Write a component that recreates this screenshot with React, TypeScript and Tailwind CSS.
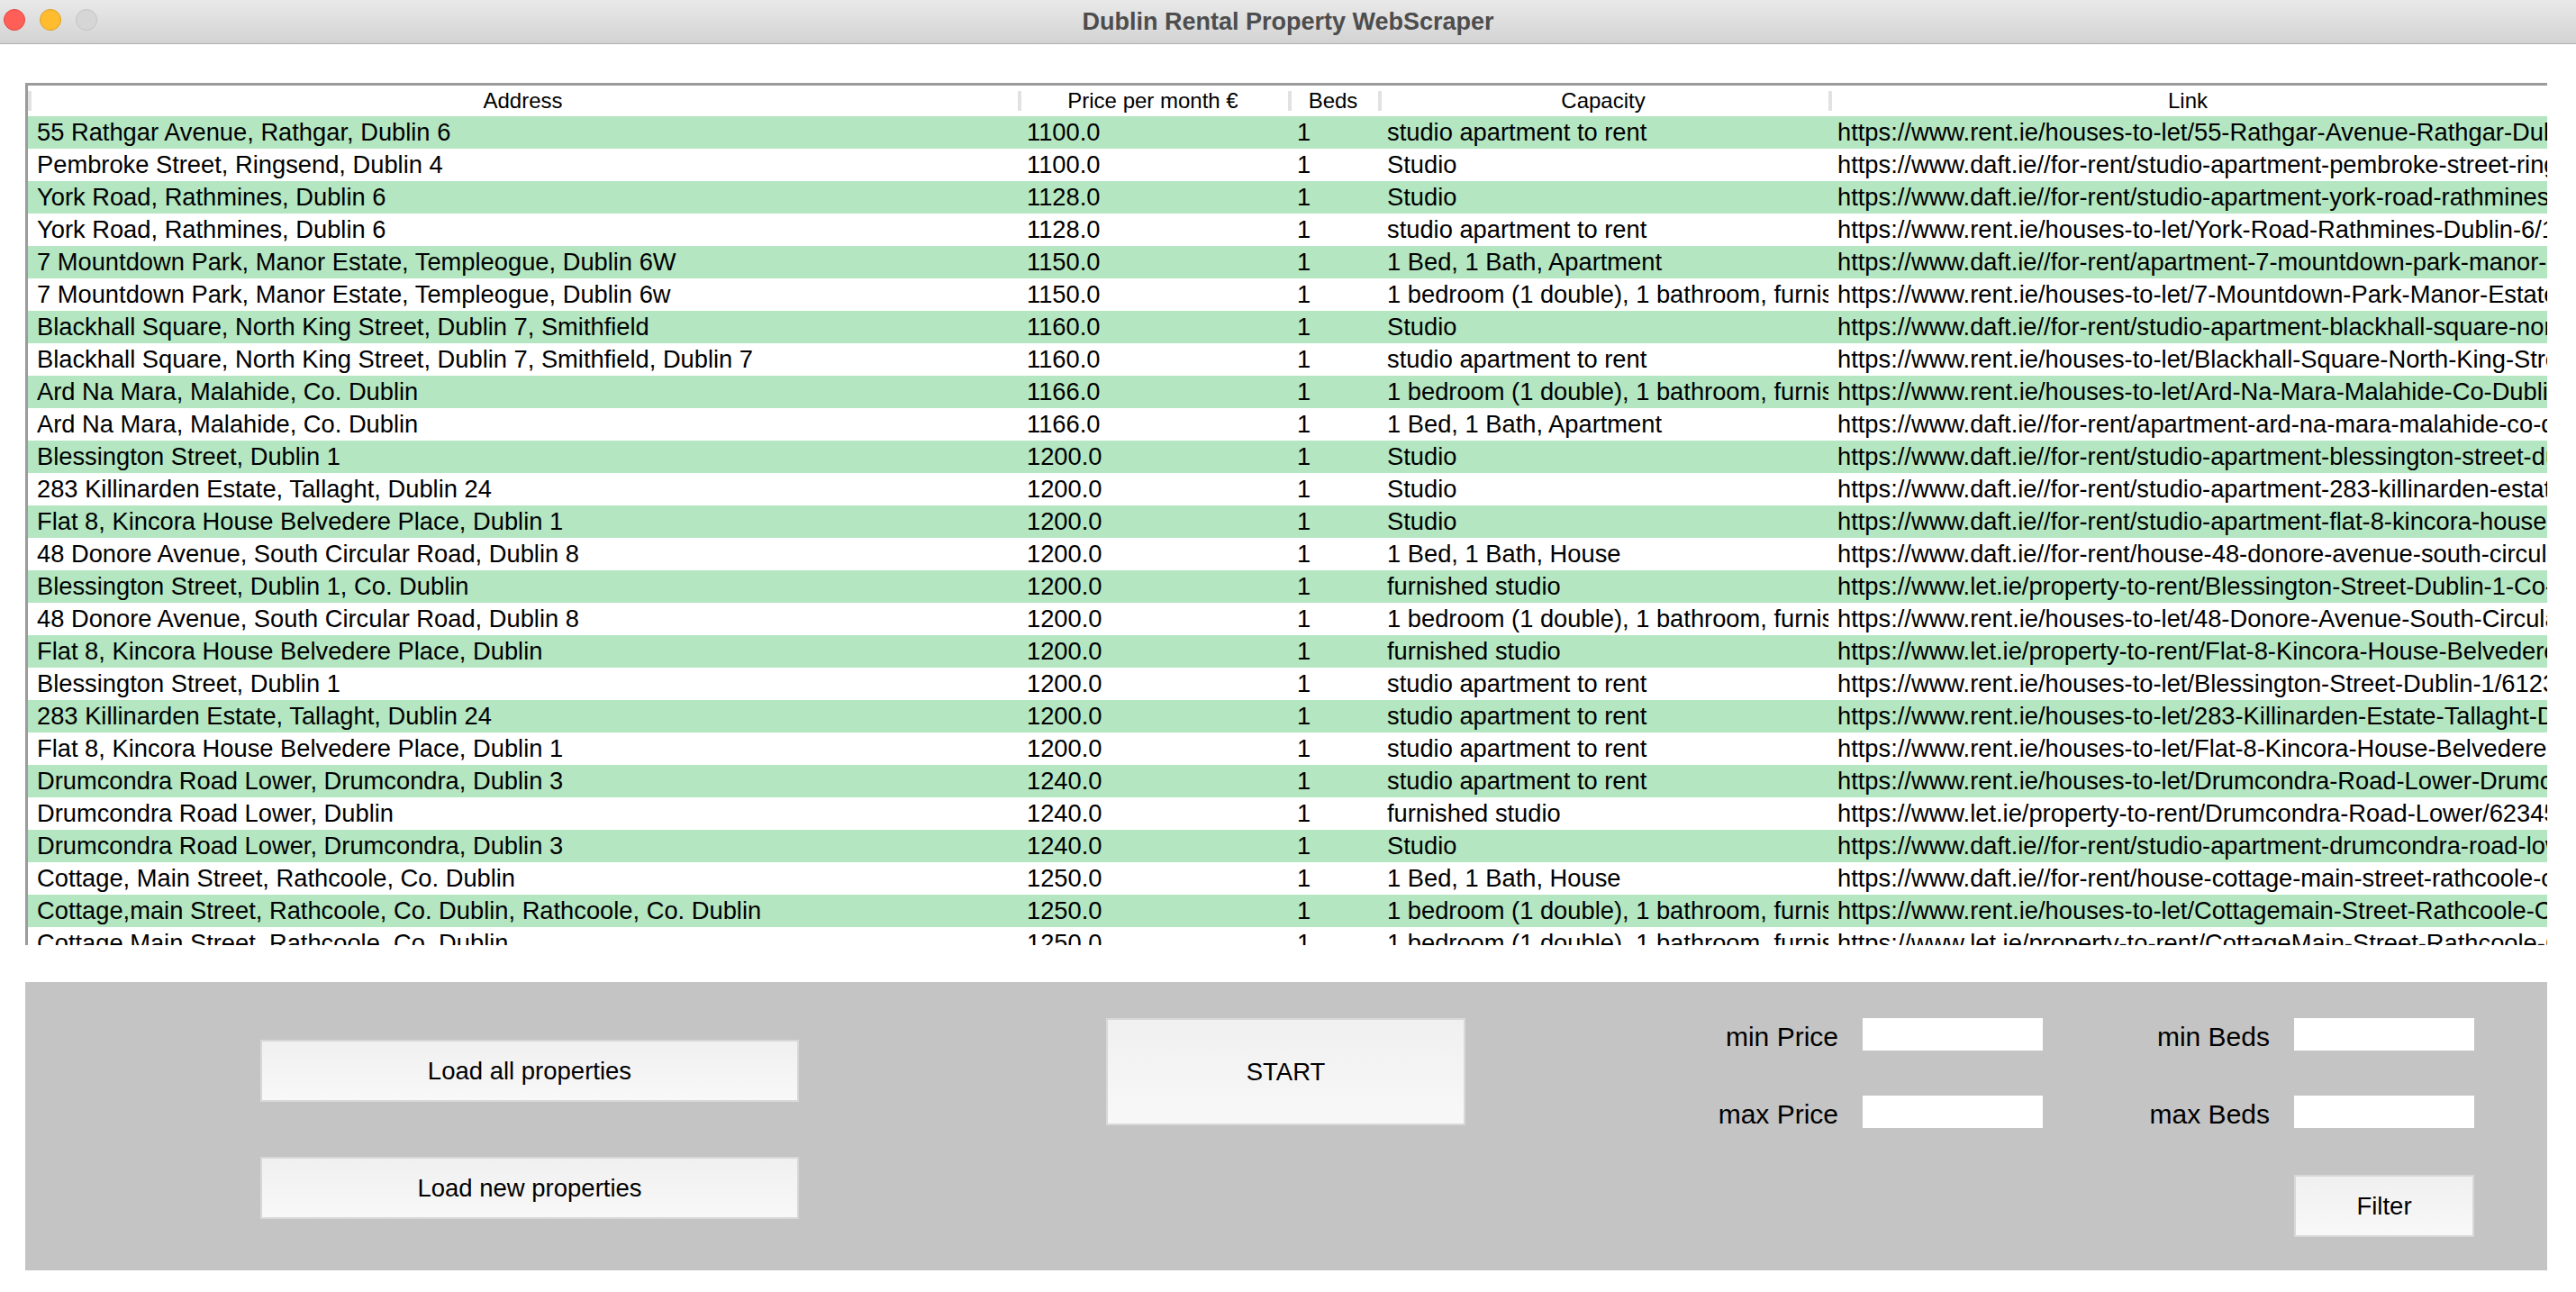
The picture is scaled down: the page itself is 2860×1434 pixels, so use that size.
const rows: [string, string, string, string, string][] = [
  ['55 Rathgar Avenue, Rathgar, Dublin 6', '1100.0', '1', 'studio apartment to rent', 'https://www.rent.ie/houses-to-let/55-Rathgar-Avenue-Rathgar-Dublin-6/1234'],
  ['Pembroke Street, Ringsend, Dublin 4', '1100.0', '1', 'Studio', 'https://www.daft.ie//for-rent/studio-apartment-pembroke-street-ringsend-dublin-4'],
  ['York Road, Rathmines, Dublin 6', '1128.0', '1', 'Studio', 'https://www.daft.ie//for-rent/studio-apartment-york-road-rathmines-dublin-6'],
  ['York Road, Rathmines, Dublin 6', '1128.0', '1', 'studio apartment to rent', 'https://www.rent.ie/houses-to-let/York-Road-Rathmines-Dublin-6/1234'],
  ['7 Mountdown Park, Manor Estate, Templeogue, Dublin 6W', '1150.0', '1', '1 Bed, 1 Bath, Apartment', 'https://www.daft.ie//for-rent/apartment-7-mountdown-park-manor-estate-templeogue'],
  ['7 Mountdown Park, Manor Estate, Templeogue, Dublin 6w', '1150.0', '1', '1 bedroom (1 double), 1 bathroom, furnished', 'https://www.rent.ie/houses-to-let/7-Mountdown-Park-Manor-Estate-Templeogue'],
  ['Blackhall Square, North King Street, Dublin 7, Smithfield', '1160.0', '1', 'Studio', 'https://www.daft.ie//for-rent/studio-apartment-blackhall-square-north-king-street'],
  ['Blackhall Square, North King Street, Dublin 7, Smithfield, Dublin 7', '1160.0', '1', 'studio apartment to rent', 'https://www.rent.ie/houses-to-let/Blackhall-Square-North-King-Street-Dublin-7'],
  ['Ard Na Mara, Malahide, Co. Dublin', '1166.0', '1', '1 bedroom (1 double), 1 bathroom, furnished', 'https://www.rent.ie/houses-to-let/Ard-Na-Mara-Malahide-Co-Dublin/1234'],
  ['Ard Na Mara, Malahide, Co. Dublin', '1166.0', '1', '1 Bed, 1 Bath, Apartment', 'https://www.daft.ie//for-rent/apartment-ard-na-mara-malahide-co-dublin/1234'],
  ['Blessington Street, Dublin 1', '1200.0', '1', 'Studio', 'https://www.daft.ie//for-rent/studio-apartment-blessington-street-dublin-1'],
  ['283 Killinarden Estate, Tallaght, Dublin 24', '1200.0', '1', 'Studio', 'https://www.daft.ie//for-rent/studio-apartment-283-killinarden-estate-tallaght'],
  ['Flat 8, Kincora House Belvedere Place, Dublin 1', '1200.0', '1', 'Studio', 'https://www.daft.ie//for-rent/studio-apartment-flat-8-kincora-house-belvedere'],
  ['48 Donore Avenue, South Circular Road, Dublin 8', '1200.0', '1', '1 Bed, 1 Bath, House', 'https://www.daft.ie//for-rent/house-48-donore-avenue-south-circular-road'],
  ['Blessington Street, Dublin 1, Co. Dublin', '1200.0', '1', 'furnished studio', 'https://www.let.ie/property-to-rent/Blessington-Street-Dublin-1-Co-Dublin'],
  ['48 Donore Avenue, South Circular Road, Dublin 8', '1200.0', '1', '1 bedroom (1 double), 1 bathroom, furnished', 'https://www.rent.ie/houses-to-let/48-Donore-Avenue-South-Circular-Road'],
  ['Flat 8, Kincora House Belvedere Place, Dublin', '1200.0', '1', 'furnished studio', 'https://www.let.ie/property-to-rent/Flat-8-Kincora-House-Belvedere-Place'],
  ['Blessington Street, Dublin 1', '1200.0', '1', 'studio apartment to rent', 'https://www.rent.ie/houses-to-let/Blessington-Street-Dublin-1/61234'],
  ['283 Killinarden Estate, Tallaght, Dublin 24', '1200.0', '1', 'studio apartment to rent', 'https://www.rent.ie/houses-to-let/283-Killinarden-Estate-Tallaght-Dublin'],
  ['Flat 8, Kincora House Belvedere Place, Dublin 1', '1200.0', '1', 'studio apartment to rent', 'https://www.rent.ie/houses-to-let/Flat-8-Kincora-House-Belvedere-Place'],
  ['Drumcondra Road Lower, Drumcondra, Dublin 3', '1240.0', '1', 'studio apartment to rent', 'https://www.rent.ie/houses-to-let/Drumcondra-Road-Lower-Drumcondra-Dublin'],
  ['Drumcondra Road Lower, Dublin', '1240.0', '1', 'furnished studio', 'https://www.let.ie/property-to-rent/Drumcondra-Road-Lower/62345'],
  ['Drumcondra Road Lower, Drumcondra, Dublin 3', '1240.0', '1', 'Studio', 'https://www.daft.ie//for-rent/studio-apartment-drumcondra-road-lower-dublin'],
  ['Cottage, Main Street, Rathcoole, Co. Dublin', '1250.0', '1', '1 Bed, 1 Bath, House', 'https://www.daft.ie//for-rent/house-cottage-main-street-rathcoole-co-dublin'],
  ['Cottage,main Street, Rathcoole, Co. Dublin, Rathcoole, Co. Dublin', '1250.0', '1', '1 bedroom (1 double), 1 bathroom, furnished', 'https://www.rent.ie/houses-to-let/Cottagemain-Street-Rathcoole-Co-Dublin'],
  ['Cottage Main Street, Rathcoole, Co. Dublin', '1250.0', '1', '1 bedroom (1 double), 1 bathroom, furnished', 'https://www.let.ie/property-to-rent/CottageMain-Street-Rathcoole-Co-Dublin'],
];

const columns = [
  { title: 'Address', width: 'w-[1099px]' },
  { title: 'Price per month €', width: 'w-[300px]' },
  { title: 'Beds', width: 'w-[100px]' },
  { title: 'Capacity', width: 'w-[500px]' },
  { title: 'Link', width: 'flex-1' },
];

function TkButton({ label, className }: { label: string; className: string }) {
  return (
    <div
      className={`flex items-center justify-center border-2 border-[#d8d8d8] bg-gradient-to-b from-[#f0f0f0] to-[#f8f8f8] text-[27.5px] text-black ${className}`}
    >
      {label}
    </div>
  );
}

function Field({ label }: { label: string }) {
  return (
    <>
      <div className="pt-[5px] text-right text-[30px] leading-none text-black">{label}</div>
      <div className="h-[36px] w-[200px] bg-white" />
    </>
  );
}

export default function App() {
  return (
    <div className="flex h-[1434px] w-[2860px] flex-col overflow-hidden bg-white font-['Liberation_Sans',Arial,sans-serif]">
      {/* title bar */}
      <div className="relative flex h-[49px] shrink-0 items-center justify-center border-b border-[#b1b1b1] bg-gradient-to-b from-[#e9e9e9] to-[#d3d3d3]">
        <div className="absolute left-[4px] top-[10px] flex gap-[16px]">
          <span className="h-[24px] w-[24px] rounded-full border border-[#e2463f] bg-[#ff5f57]" />
          <span className="h-[24px] w-[24px] rounded-full border border-[#dfa023] bg-[#febc2e]" />
          <span className="h-[24px] w-[24px] rounded-full border border-[#c4c4c4] bg-[#d6d6d6]" />
        </div>
        <span className="text-[27px] font-bold text-[#4d4d4d]">Dublin Rental Property WebScraper</span>
      </div>

      {/* table */}
      <div className="ml-[28px] mt-[43px] flex h-[957px] w-[2800px] shrink-0 flex-col overflow-hidden border-l-[3px] border-t-[3px] border-[#9b9b9b]">
        <div className="flex h-[34px] shrink-0 bg-white">
          {columns.map((c) => (
            <div key={c.title} className={`relative flex items-center justify-center text-[24px] text-black ${c.width}`}>
              <span className="absolute left-0 top-[6px] h-[22px] w-[4px] bg-[#e2e2e2]" />
              {c.title}
            </div>
          ))}
        </div>
        {rows.map((r, i) => (
          <div
            key={i}
            className={`flex h-[36px] shrink-0 items-center text-[27.3px] text-black ${i % 2 === 0 ? 'bg-[#b3e6c1]' : 'bg-white'}`}
          >
            {r.map((cell, j) => (
              <div key={j} className={`overflow-hidden whitespace-nowrap pl-[10px] ${columns[j].width}`}>
                {cell}
              </div>
            ))}
          </div>
        ))}
      </div>

      {/* control panel */}
      <div className="ml-[28px] mt-[41px] flex h-[320px] w-[2800px] shrink-0 items-start bg-[#c4c4c4]">
        <div className="ml-[261px] flex w-[598px] flex-col gap-[61px] pt-[64px]">
          <TkButton label="Load all properties" className="h-[69px]" />
          <TkButton label="Load new properties" className="h-[69px]" />
        </div>
        <TkButton label="START" className="ml-[341px] mt-[40px] h-[119px] w-[399px]" />
        <div className="mt-[40px] grid grid-cols-[414px_200px_225px_200px] items-center gap-x-[27px] gap-y-[50px]">
          <Field label="min Price" />
          <Field label="min Beds" />
          <Field label="max Price" />
          <Field label="max Beds" />
          <div />
          <div />
          <div />
          <TkButton label="Filter" className="mt-[2px] h-[69px] w-[200px]" />
        </div>
      </div>
    </div>
  );
}
